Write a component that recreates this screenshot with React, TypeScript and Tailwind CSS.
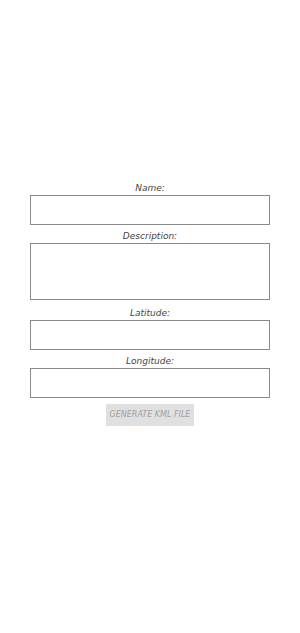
import { useState } from 'react'

const FIELDS = [
  { id: 'name', label: 'Name:', tall: false },
  { id: 'description', label: 'Description:', tall: true },
  { id: 'latitude', label: 'Latitude:', tall: false },
  { id: 'longitude', label: 'Longitude:', tall: false },
] as const

export default function App() {
  const [values, setValues] = useState<Record<string, string>>({})

  return (
    <div
      className="flex h-[633px] w-[300px] flex-col items-center bg-white pt-[183px] text-[#333]"
      style={{ fontFamily: '"Comic Sans MS", "DejaVu Sans", sans-serif' }}
    >
      <form className="flex w-[240px] flex-col items-center" onSubmit={(e) => e.preventDefault()}>
        {FIELDS.map(({ id, label, tall }) => (
          <div key={id} className="mb-[6px] flex w-full flex-col items-center">
            <label htmlFor={id} className="mb-[1px] block h-[11px] text-[9px] italic leading-[11px] text-[#444]">
              {label}
            </label>
            {tall ? (
              <textarea
                id={id}
                value={values[id] ?? ''}
                onChange={(e) => setValues((v) => ({ ...v, [id]: e.target.value }))}
                className="mb-[2px] block h-[57px] w-full resize-none border border-[#8a8a8a] bg-white outline-none"
              />
            ) : (
              <input
                id={id}
                value={values[id] ?? ''}
                onChange={(e) => setValues((v) => ({ ...v, [id]: e.target.value }))}
                className="block h-[30px] w-full border border-[#8a8a8a] bg-white outline-none"
              />
            )}
          </div>
        ))}
        <button
          type="submit"
          disabled
          className="h-[22px] w-[88px] bg-[#e0e0e0] text-[8px] italic uppercase text-[#a0a0a0]"
        >
          Generate KML file
        </button>
      </form>
    </div>
  )
}
